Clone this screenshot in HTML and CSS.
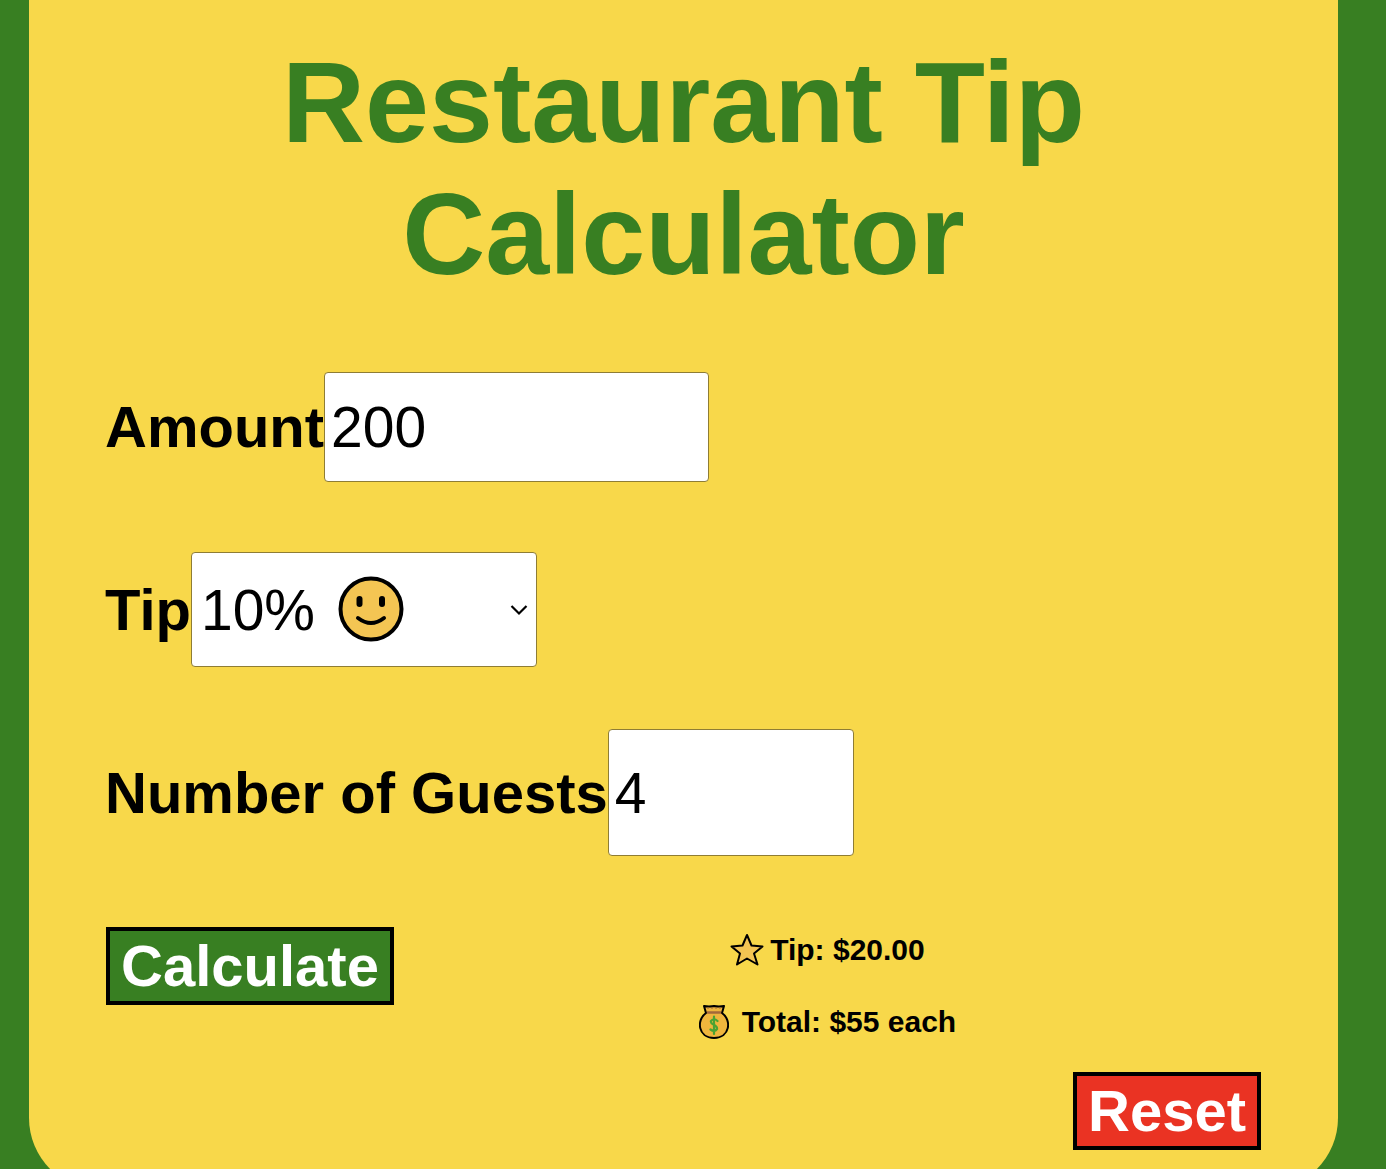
FILE: index.html
```html
<!DOCTYPE html>
<html lang="en">
<head>
<meta charset="utf-8">
<meta name="viewport" content="width=device-width, initial-scale=1">
<title>Restaurant Tip Calculator</title>
<link rel="stylesheet" href="styles.css">
</head>
<body>
<main class="panel">
  <h1 class="title">Restaurant Tip Calculator</h1>
  <form class="form">
    <div class="field">
      <label for="amount">Amount</label>
      <input class="control amount" id="amount" type="text" inputmode="decimal" value="200">
    </div>
    <div class="field">
      <label for="tip">Tip</label>
      <div class="select">
        <select class="control tip" id="tip">
          <option>10%</option>
          <option>15%</option>
          <option>20%</option>
        </select>
        <svg class="smile" viewBox="0 0 66 66" aria-hidden="true">
          <circle cx="33" cy="33" r="30.5" fill="#f4c553" stroke="#000" stroke-width="4"/>
          <rect x="18.500" y="20" width="6" height="11" rx="3"/>
          <rect x="41" y="20" width="6" height="11" rx="3"/>
          <path d="M20 42Q33 52 46 42" fill="none" stroke="#000" stroke-width="4" stroke-linecap="round"/>
        </svg>
        <svg class="chevron" viewBox="0 0 18 12" aria-hidden="true">
          <path d="M1.500 2L9 9.500L16.500 2" fill="none" stroke="#000" stroke-width="2.200"/>
        </svg>
      </div>
    </div>
    <div class="field">
      <label for="guests">Number of Guests</label>
      <input class="control guests" id="guests" type="text" inputmode="numeric" value="4">
    </div>
    <div class="actions">
      <button class="button calculate" type="button">Calculate</button>
      <div class="results">
        <p class="result">
          <svg class="star" viewBox="0 0 34 34" aria-hidden="true">
            <path d="M17 2L21.500 12.500L32.500 13.500L24 20.500L27.500 31.500L17 25.500L7 31.500L10 20.500L1.500 13.500L12.500 12.500Z" fill="#f4c553" stroke="#000" stroke-width="2" stroke-linejoin="round"/>
          </svg>
          <span>Tip: $20.00</span>
        </p>
        <p class="result money">
          <svg class="bag" viewBox="0 0 30 36" aria-hidden="true">
            <path d="M7 9C-3 16-1 34 15 34S33 16 23 9L25 2Q20 3 15 2Q10 3 5 2Z" fill="#efb63d" stroke="#000" stroke-width="2" stroke-linejoin="round"/>
            <path d="M8 8.500H22" stroke="#a4683a" stroke-width="2.500"/>
            <path d="M9 5V3M13 5V3M17 5V3M21 5V3" stroke="#a4683a" stroke-width="1"/>
            <path d="M18.500 17Q15 13.500 12 17C10.500 21 19 20.500 18 25Q15.500 28.500 11.500 25.500M15 12.500V30" fill="none" stroke="#4ba332" stroke-width="2.200" stroke-linecap="round"/>
          </svg>
          <span>Total: $55 each</span>
        </p>
      </div>
    </div>
    <button class="button reset" type="reset">Reset</button>
  </form>
</main>
</body>
</html>
```
FILE: styles.css
```css
* {
  box-sizing: border-box;
}

body {
  margin: 0;
  height: 100vh;
  overflow: hidden;
  background: #387f22;
  color: #000;
  font-family: Arial, "Liberation Sans", sans-serif;
}

.panel {
  margin: 0 48px 0 29px;
  padding: 36px 75px 40px;
  border-radius: 0 0 72px 72px;
  background: #f8d84a;
}

.title {
  margin: 0 0 63px;
  color: #387f22;
  font-size: 115px;
  line-height: 132px;
  text-align: center;
}

.form {
  display: flex;
  flex-direction: column;
  gap: 56px;
}

.field {
  display: flex;
  align-items: center;
  min-height: 127px;
  padding-left: 1px;
  font-size: 58px;
  font-weight: bold;
  line-height: 66px;
}

.control {
  display: block;
  border: 1px solid #8f7d34;
  border-radius: 4px;
  padding: 0 6px;
  background: #fff;
  color: #000;
  font: 57px Arial, "Liberation Sans", sans-serif;
}

.amount {
  width: 385px;
  height: 110px;
}

.guests {
  width: 246px;
  height: 127px;
}

.select {
  position: relative;
}

.tip {
  width: 346px;
  height: 115px;
  padding: 0 9px;
  appearance: none;
}

.smile,
.chevron {
  position: absolute;
  pointer-events: none;
}

.smile {
  top: 24px;
  left: 147px;
  width: 66px;
  height: 66px;
}

.chevron {
  top: 52px;
  right: 9px;
  width: 18px;
  height: 12px;
}

.actions {
  display: flex;
  align-items: flex-start;
  margin: 15px 2px 0;
}

.button {
  border: 4px solid #000;
  border-radius: 0;
  padding: 2px 11px;
  color: #fff;
  font: bold 58px/66px Arial, "Liberation Sans", sans-serif;
}

.calculate {
  background: #387f22;
}

.reset {
  align-self: flex-end;
  margin: -24px 2px 0;
  background: #ea3323;
}

.results {
  display: flex;
  flex: 1;
  flex-direction: column;
  gap: 36px;
  padding-top: 5px;
  font-size: 30px;
  font-weight: bold;
  line-height: 36px;
}

.result {
  display: flex;
  align-items: center;
  justify-content: center;
  gap: 6px;
  margin: 0;
}

.money {
  gap: 13px;
}

.star {
  width: 34px;
  height: 34px;
}

.bag {
  width: 30px;
  height: 36px;
}
```
